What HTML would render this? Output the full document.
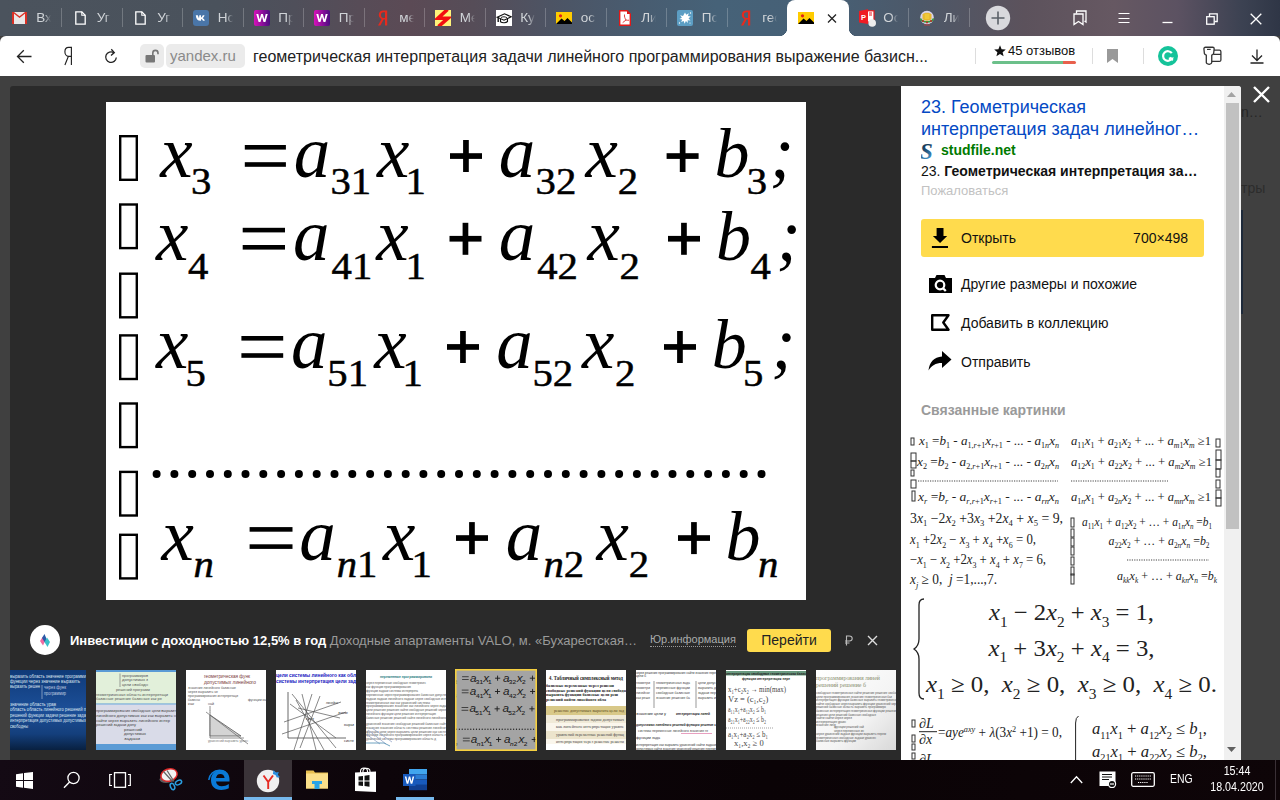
<!DOCTYPE html>
<html><head><meta charset="utf-8">
<style>
*{box-sizing:border-box;margin:0;padding:0}
html,body{width:1280px;height:800px;overflow:hidden;background:#404040;font-family:"Liberation Sans",sans-serif;position:relative}
.a{position:absolute}
#tabs{left:0;top:0;width:1280px;height:36px;background:linear-gradient(90deg,#4b535d 0%,#4a525c 17%,#4f4f5a 23%,#574c57 28%,#5b4a55 32%,#564d58 37%,#4d5464 43%,#485c70 50%,#466278 56%,#466076 64%,#4d5868 72%,#5c525c 80%,#665862 87%,#5c5262 92%,#3c4252 97%,#2f3646 100%)}
#addr{left:0;top:36px;width:1280px;height:40px;background:#fff;border-radius:6px 6px 0 0}
#content{left:0;top:76px;width:1280px;height:684px;background:#404040}
#inner{left:10px;top:86px;width:891px;height:674px;background:#2a2a2a;border-radius:3px 0 0 0}
#img{left:106px;top:102px;width:700px;height:498px;background:#fff;overflow:hidden}
#side{left:901px;top:86px;width:340px;height:674px;background:#fff;border-radius:0 3px 0 0;overflow:hidden}
#task{left:0;top:760px;width:1280px;height:40px;background:linear-gradient(100deg,#140a14 0%,#0d050a 30%,#0a0306 60%,#0e0508 100%)}
.tt{top:10px;height:16px;width:15px;font-size:13.5px;line-height:16px;color:#d0d4d8;white-space:nowrap;overflow:hidden;-webkit-mask-image:linear-gradient(90deg,#000 55%,transparent)}
.sep{top:8px;width:1px;height:19px;background:rgba(255,255,255,.22)}
</style></head><body>
<div id="tabs" class="a"></div>
<div class="a" style="left:12.0px;top:12.0px;width:15px;height:12px;line-height:0"><svg width="15" height="12" viewBox="0 0 15 12"><rect x="0" y="0" width="15" height="12" fill="#e8e8e8"/><path d="M0 0h2v12H0zM13 0h2v12h-2z" fill="#d93025"/><path d="M0 0l7.5 6L15 0h-2L7.5 4.2 2 0z" fill="#d93025"/></svg></div>
<div class="a tt" style="left:36.2px">Вх</div>
<div class="a" style="left:74.5px;top:11.0px;width:11px;height:14px;line-height:0"><svg width="11" height="14" viewBox="0 0 11 14"><path d="M0.8 0.8h6l3.4 3.4v9h-9.4z" fill="none" stroke="#fff" stroke-width="1.3"/><path d="M6.8 0.8v3.4h3.4" fill="none" stroke="#fff" stroke-width="1.1"/></svg></div>
<div class="a tt" style="left:96.7px">Уг</div>
<div class="a" style="left:135.0px;top:11.0px;width:11px;height:14px;line-height:0"><svg width="11" height="14" viewBox="0 0 11 14"><path d="M0.8 0.8h6l3.4 3.4v9h-9.4z" fill="none" stroke="#fff" stroke-width="1.3"/><path d="M6.8 0.8v3.4h3.4" fill="none" stroke="#fff" stroke-width="1.1"/></svg></div>
<div class="a tt" style="left:157.2px">Уг</div>
<div class="a" style="left:193.0px;top:10.0px;width:16px;height:16px;line-height:0"><svg width="16" height="16" viewBox="0 0 16 16"><rect width="16" height="16" rx="3" fill="#4a76a8"/><path d="M2.8 5.2h2l1.2 3.2.3-3.2h1.7v2.4c.6-.2 1.4-1.3 1.8-2.4h1.7c-.3 1.3-1.2 2.3-1.9 2.9.8.4 1.8 1.4 2.2 2.7h-1.9c-.4-.9-1.2-1.6-1.9-1.7v1.7h-.4c-3 0-4.5-2-4.8-5.6z" fill="#fff"/></svg></div>
<div class="a tt" style="left:217.7px">Нс</div>
<div class="a" style="left:253.5px;top:10.0px;width:16px;height:16px;line-height:0"><svg width="16" height="16" viewBox="0 0 16 16"><defs><linearGradient id="wg" x1="0" x2="1"><stop offset="0" stop-color="#d612b8"/><stop offset="1" stop-color="#4a0c80"/></linearGradient></defs><rect width="16" height="16" rx="2" fill="url(#wg)"/><path d="M2.3 4h2l1.3 5.4L7.1 4h1.8l1.5 5.4L11.7 4h2l-2.3 8h-1.9L8 6.8 6.5 12H4.6z" fill="#fff"/></svg></div>
<div class="a tt" style="left:278.2px">Пр</div>
<div class="a" style="left:314.0px;top:10.0px;width:16px;height:16px;line-height:0"><svg width="16" height="16" viewBox="0 0 16 16"><defs><linearGradient id="wg" x1="0" x2="1"><stop offset="0" stop-color="#d612b8"/><stop offset="1" stop-color="#4a0c80"/></linearGradient></defs><rect width="16" height="16" rx="2" fill="url(#wg)"/><path d="M2.3 4h2l1.3 5.4L7.1 4h1.8l1.5 5.4L11.7 4h2l-2.3 8h-1.9L8 6.8 6.5 12H4.6z" fill="#fff"/></svg></div>
<div class="a tt" style="left:338.7px">Пр</div>
<div class="a" style="left:377.5px;top:10.0px;width:10px;height:16px;line-height:0"><svg width="10" height="16" viewBox="0 0 10 16"><path d="M7 0.5h2.2v15H7V9.6H5.6L2.4 15.5H0L3.6 9C1.8 8.3 0.8 6.8 0.8 4.8 0.8 2 2.8 0.5 5.4 0.5zM7 2.3H5.5C3.9 2.3 3 3.3 3 5c0 1.9 1 2.9 2.6 2.9H7z" fill="#e62a1e"/></svg></div>
<div class="a tt" style="left:399.2px">ме</div>
<div class="a" style="left:435.0px;top:10.0px;width:16px;height:16px;line-height:0"><svg width="16" height="16" viewBox="0 0 16 16"><defs><clipPath id="bc"><rect width="16" height="16"/></clipPath></defs><rect width="16" height="16" fill="#fff47a"/><path d="M12.5 -0.5L3 8.2H13L3.5 16.5" fill="none" stroke="#f21010" stroke-width="3.6" stroke-linejoin="miter" clip-path="url(#bc)"/></svg></div>
<div class="a tt" style="left:459.7px">Ме</div>
<div class="a" style="left:495.5px;top:10.0px;width:16px;height:16px;line-height:0"><svg width="16" height="16" viewBox="0 0 16 16"><rect width="16" height="16" fill="#fff"/><path d="M1.2 7.2L8.5 3.8 15.2 6.8 8 10.2z" fill="none" stroke="#111" stroke-width="1.2"/><path d="M4.5 8.8v3c2 1.5 5.5 1.3 7-0.3V8.6" fill="none" stroke="#111" stroke-width="1.1"/><path d="M2.2 7.6v4.5" stroke="#111" stroke-width="1.4"/><path d="M5 7.5c2-1 4-1 6 .3" fill="none" stroke="#111" stroke-width=".9"/></svg></div>
<div class="a tt" style="left:520.2px">Ку</div>
<div class="a" style="left:556.0px;top:12.0px;width:16px;height:12px;line-height:0"><svg width="16" height="12" viewBox="0 0 16 12"><rect width="16" height="12" fill="#ffcc00"/><circle cx="4.5" cy="3.8" r="1.6" fill="#e0201a"/><path d="M0 12L5.5 6.5 8.5 9 11.5 6 16 10.5V12z" fill="#000"/></svg></div>
<div class="a tt" style="left:580.7px">ос</div>
<div class="a" style="left:618.5px;top:10.0px;width:12px;height:16px;line-height:0"><svg width="12" height="16" viewBox="0 0 12 16"><path d="M0.7 0.7h7.3l3.3 3.3v11.3H0.7z" fill="#fff" stroke="#e01818" stroke-width="1.4"/><path d="M8 0.7v3.3h3.3z" fill="#e01818"/><path d="M5.5 4.5c-.3 2 .5 4 1.5 5.5M7 10c1 .3 2 .4 3 .2M7 10c-1 .8-2.3 1.8-3.3 2.6" fill="none" stroke="#e04040" stroke-width="1"/></svg></div>
<div class="a tt" style="left:641.2px">Ли</div>
<div class="a" style="left:677.0px;top:10.0px;width:16px;height:16px;line-height:0"><svg width="16" height="16" viewBox="0 0 16 16"><rect width="16" height="16" rx="2" fill="#5c9ec4"/><path d="M8 2.5l1.2 2.3 2.6-1.5-.8 2.7 2.8.6-2.3 1.6 2 2.2-2.9-.2.3 2.8-2-1.9-1.3 2.6-.9-2.8-2.6 1.2 1.2-2.6L2.4 9l2.5-1.3-1.7-2.4 2.8.6z" fill="#fff"/><circle cx="13.5" cy="3" r=".7" fill="#fff"/><circle cx="2.5" cy="13" r=".7" fill="#fff"/><circle cx="13" cy="13" r=".6" fill="#fff"/></svg></div>
<div class="a tt" style="left:701.7px">Пс</div>
<div class="a" style="left:740.5px;top:10.0px;width:10px;height:16px;line-height:0"><svg width="10" height="16" viewBox="0 0 10 16"><path d="M7 0.5h2.2v15H7V9.6H5.6L2.4 15.5H0L3.6 9C1.8 8.3 0.8 6.8 0.8 4.8 0.8 2 2.8 0.5 5.4 0.5zM7 2.3H5.5C3.9 2.3 3 3.3 3 5c0 1.9 1 2.9 2.6 2.9H7z" fill="#e62a1e"/></svg></div>
<div class="a tt" style="left:762.2px">гео</div>
<div class="a" style="left:857.5px;top:9.0px;width:18px;height:18px;line-height:0"><svg width="18" height="18" viewBox="0 0 18 18"><rect x="9" y="1.8" width="7" height="11.3" fill="#fff" stroke="#e8151b" stroke-width="1.2"/><path d="M1 2L10 0.2V15L1 13.5z" fill="#ee1c23"/><text x="3" y="10.5" font-size="7.5" font-weight="bold" fill="#fff" font-family="Liberation Sans">P</text><path d="M11 4h3M11 6h3" stroke="#e8151b" stroke-width="1"/><circle cx="14.2" cy="14" r="3.8" fill="#ececec"/></svg></div>
<div class="a tt" style="left:883.2px">Ос</div>
<div class="a" style="left:919.0px;top:10.0px;width:16px;height:16px;line-height:0"><svg width="16" height="16" viewBox="0 0 16 16"><circle cx="8" cy="7.5" r="6.8" fill="#d8d4ec"/><path d="M3.5 4.5c1-2.5 8-2.5 9 0v4c-1 3-8 3-9 0z" fill="#e8b830"/><rect x="5.8" y="4" width="4.4" height="5" fill="#f0c838"/><path d="M1.5 8.5c1.5 4.5 11.5 4.5 13 0" stroke="#3a9a3a" stroke-width="1.6" fill="none"/><circle cx="4" cy="11" r=".9" fill="#d02020"/><circle cx="12" cy="11" r=".9" fill="#d02020"/><circle cx="8" cy="12.5" r=".9" fill="#d02020"/><path d="M5 15h6" stroke="#b04040" stroke-width="1"/></svg></div>
<div class="a tt" style="left:943.7px">Ли</div>
<div class="a sep" style="left:61.2px"></div>
<div class="a sep" style="left:121.7px"></div>
<div class="a sep" style="left:182.2px"></div>
<div class="a sep" style="left:242.7px"></div>
<div class="a sep" style="left:303.2px"></div>
<div class="a sep" style="left:363.7px"></div>
<div class="a sep" style="left:424.2px"></div>
<div class="a sep" style="left:484.7px"></div>
<div class="a sep" style="left:545.2px"></div>
<div class="a sep" style="left:605.7px"></div>
<div class="a sep" style="left:666.2px"></div>
<div class="a sep" style="left:726.7px"></div>
<div class="a sep" style="left:908.2px"></div>
<div class="a sep" style="left:968.7px"></div>
<div class="a" style="left:787px;top:0;width:62px;height:40px;background:#fff;border-radius:8px 8px 0 0"></div>
<div class="a" style="left:779px;top:28px;width:8px;height:8px;background:radial-gradient(circle at 0 0,transparent 8px,#fff 8.5px)"></div>
<div class="a" style="left:849px;top:28px;width:8px;height:8px;background:radial-gradient(circle at 100% 0,transparent 8px,#fff 8.5px)"></div>
<div class="a" style="left:798px;top:12px;width:16px;height:12px;line-height:0"><svg width="16" height="12" viewBox="0 0 16 12"><rect width="16" height="12" fill="#ffcc00"/><circle cx="4.5" cy="3.8" r="1.6" fill="#e0201a"/><path d="M0 12L5.5 6.5 8.5 9 11.5 6 16 10.5V12z" fill="#000"/></svg></div>
<svg class="a" style="left:827px;top:14px" width="10" height="9" viewBox="0 0 10 9"><path d="M1 0.5l8 8M9 0.5l-8 8" stroke="#222" stroke-width="1.3"/></svg>
<svg class="a" style="left:985px;top:5px" width="26" height="26" viewBox="0 0 26 26"><circle cx="13" cy="13" r="12.2" fill="#d9d9dd"/><path d="M6.5 13h13M13 6.5v13" stroke="#5a6068" stroke-width="1.6"/></svg>
<svg class="a" style="left:1073px;top:10px" width="14" height="16" viewBox="0 0 14 16"><path d="M3.5 3.5V1h9.5v11l-1.5-1" fill="none" stroke="#fff" stroke-width="1.3"/><path d="M1 4h9v10.5l-4.5-3-4.5 3z" fill="none" stroke="#fff" stroke-width="1.3"/></svg>
<svg class="a" style="left:1118px;top:12px" width="12" height="12" viewBox="0 0 12 12"><path d="M0.5 1.5h11M0.5 6.5h11M0.5 10.5h11" stroke="#fff" stroke-width="1"/></svg>
<svg class="a" style="left:1162px;top:21px" width="11" height="3" viewBox="0 0 11 3"><path d="M0.5 1.5h10" stroke="#fff" stroke-width="1.3"/></svg>
<svg class="a" style="left:1206px;top:13px" width="12" height="12" viewBox="0 0 12 12"><rect x="0.7" y="3.7" width="7.5" height="7.5" fill="none" stroke="#fff" stroke-width="1.3"/><path d="M3.5 3.5V0.8h7.7v7.7H8.5" fill="none" stroke="#fff" stroke-width="1.3"/></svg>
<svg class="a" style="left:1250px;top:13px" width="12" height="12" viewBox="0 0 12 12"><path d="M0.7 0.7l10.6 10.6M11.3 0.7L0.7 11.3" stroke="#fff" stroke-width="1.3"/></svg>

<div id="addr" class="a"></div>
<svg class="a" style="left:16px;top:49px" width="16" height="15" viewBox="0 0 16 15"><path d="M15.5 7.5H1.5M7.8 1.2L1.5 7.5l6.3 6.3" fill="none" stroke="#222" stroke-width="1.3"/></svg>
<svg class="a" style="left:63px;top:46px" width="11" height="20" viewBox="0 0 11 20"><path d="M8.4 19V1.3H5.6C3.4 1.3 1.9 3.2 1.9 5.7s1.5 4.6 3.7 4.6H8.4M5.4 10.3L1.9 19" fill="none" stroke="#222" stroke-width="1.15"/></svg>
<svg class="a" style="left:104px;top:48px" width="15" height="16" viewBox="0 0 15 16"><path d="M12.3 9.5A5.3 5.3 0 1 1 9.8 4.6" fill="none" stroke="#222" stroke-width="1.3"/><path d="M7.3 1.3l3 3.3-3.3 2.8" fill="none" stroke="#222" stroke-width="1.3"/></svg>
<div class="a" style="left:140px;top:44px;width:24px;height:24px;background:#ebebeb;border-radius:5px"></div>
<svg class="a" style="left:145px;top:49px" width="14" height="14" viewBox="0 0 14 14"><rect x="0.5" y="6" width="9.5" height="7.5" rx="1" fill="#777"/><path d="M7.8 6.5V4a2.6 2.6 0 0 1 5.2 0v1.2" fill="none" stroke="#777" stroke-width="1.6"/></svg>
<div class="a" style="left:166px;top:44px;width:79px;height:24px;background:#ebebeb;border-radius:5px"></div>
<div class="a" style="left:170px;top:44px;height:24px;line-height:24px;font-size:15px;color:#8a8a8a">yandex.ru</div>
<div class="a" id="url" style="left:253px;top:45px;height:24px;line-height:24px;font-size:16px;color:#222;white-space:nowrap">геометрическая интерпретация задачи линейного программирования выражение базисн...</div>
<div class="a" style="left:975px;top:48px;width:1px;height:16px;background:#ddd"></div>
<svg class="a" style="left:994px;top:45px" width="12" height="12" viewBox="0 0 12 12"><path d="M6 0.3l1.6 3.9 4.2.3-3.2 2.7 1 4.1L6 9.1 2.4 11.3l1-4.1L0.2 4.5l4.2-.3z" fill="#111"/></svg><div class="a" id="rev" style="left:1008px;top:43px;height:16px;line-height:16px;font-size:13px;color:#111;white-space:nowrap">45 отзывов</div>
<div class="a" style="left:992px;top:61px;width:84px;height:3px;border-radius:2px;background:linear-gradient(90deg,#6cc08a 0,#6cc08a 85%,#e8604c 85%)"></div>
<div class="a" style="left:1092px;top:48px;width:1px;height:16px;background:#ddd"></div>
<svg class="a" style="left:1107px;top:49px" width="11" height="14" viewBox="0 0 11 14"><path d="M0 0h11v14L5.5 10 0 14z" fill="#999"/></svg>
<div class="a" style="left:1143px;top:48px;width:1px;height:16px;background:#ddd"></div>
<svg class="a" style="left:1157px;top:45px" width="22" height="22" viewBox="0 0 22 22"><circle cx="11" cy="11" r="10" fill="#15c39a"/><path d="M14.8 8.2A4.8 4.8 0 1 0 15 13.5h-3.2" fill="none" stroke="#fff" stroke-width="2.2"/><path d="M13 12.5l2.8 2.8" stroke="#fff" stroke-width="1.8"/></svg>
<svg class="a" style="left:1201px;top:45px" width="22" height="22" viewBox="0 0 22 22"><path d="M4.5 2.25H11.7Q13.2 2.25 13.2 3.8L12.6 8.5Q12.2 9.8 10.75 10.2V17.5Q10.75 18.8 8.2 19.4Q5.3 18.8 5.3 17.5V10.2Q3.8 9.8 3.4 8.5L2.9 3.8Q2.9 2.25 4.5 2.25Z" fill="none" stroke="#333" stroke-width="1.3"/><path d="M6 4.4H9.7" stroke="#333" stroke-width="1.2"/><path d="M12.9 5.2H18.4Q19.9 5.2 19.9 6.7V14.9Q19.9 16.4 18.4 16.4H10.75M12.4 9.4H19.9" fill="none" stroke="#333" stroke-width="1.3"/></svg>
<svg class="a" style="left:1250px;top:49px" width="14" height="15" viewBox="0 0 14 15"><path d="M7 0.5v11M2 6.5l5 5 5-5M0.5 14h13" fill="none" stroke="#222" stroke-width="1.3"/></svg>

<div id="content" class="a"></div>
<div id="inner" class="a"></div>
<div class="a" style="left:1241px;top:104px;font-size:14px;line-height:16px;color:#262626;white-space:nowrap">n…</div>
<div class="a" style="left:1241px;top:180px;font-size:14px;line-height:16px;color:#2c2c2c;white-space:nowrap">тры</div>
<div class="a" style="left:1241px;top:210px;width:2px;height:104px;background:#1e2a3a"></div>

<div id="img" class="a"><svg width="700" height="498" font-family="Liberation Serif"><g id="mathg"><rect x="14.2" y="34.2" width="16.6" height="43.6" fill="none" stroke="#000" stroke-width="2.4"/><rect x="14.2" y="102.5" width="16.6" height="43.6" fill="none" stroke="#000" stroke-width="2.4"/><rect x="14.2" y="171.7" width="16.6" height="43.6" fill="none" stroke="#000" stroke-width="2.4"/><rect x="14.2" y="233.4" width="16.6" height="43.6" fill="none" stroke="#000" stroke-width="2.4"/><rect x="14.2" y="301.5" width="16.6" height="43.6" fill="none" stroke="#000" stroke-width="2.4"/><rect x="14.2" y="369.9" width="16.6" height="43.6" fill="none" stroke="#000" stroke-width="2.4"/><rect x="14.2" y="432.8" width="16.6" height="43.6" fill="none" stroke="#000" stroke-width="2.4"/><text x="54.2" y="75.4" font-size="73"><tspan font-style="italic">x</tspan></text><text transform="translate(85.1 91.8) scale(1.10 1)" font-size="37" stroke="#000" stroke-width="0.5"><tspan font-style="normal">3</tspan></text><rect x="138.8" y="43.0" width="41.1" height="4.6"/><rect x="138.8" y="60.2" width="41.1" height="4.6"/><text x="187.8" y="75.4" font-size="73"><tspan font-style="italic">a</tspan></text><text transform="translate(224.5 91.8) scale(1.10 1)" font-size="37" stroke="#000" stroke-width="0.5"><tspan font-style="normal">3</tspan><tspan font-style="normal">1</tspan></text><text x="270.9" y="75.4" font-size="73"><tspan font-style="italic">x</tspan></text><text transform="translate(299.4 91.8) scale(1.10 1)" font-size="37" stroke="#000" stroke-width="0.5"><tspan font-style="normal">1</tspan></text><rect x="344.0" y="51.2" width="32" height="5.7"/><rect x="357.1" y="38.0" width="5.7" height="32"/><text x="392.8" y="75.4" font-size="73"><tspan font-style="italic">a</tspan></text><text transform="translate(429.6 91.8) scale(1.10 1)" font-size="37" stroke="#000" stroke-width="0.5"><tspan font-style="normal">3</tspan><tspan font-style="normal">2</tspan></text><text x="479.4" y="75.4" font-size="73"><tspan font-style="italic">x</tspan></text><text transform="translate(511.7 91.8) scale(1.10 1)" font-size="37" stroke="#000" stroke-width="0.5"><tspan font-style="normal">2</tspan></text><rect x="560.6" y="51.2" width="32" height="5.7"/><rect x="573.8" y="38.0" width="5.7" height="32"/><text x="608.4" y="75.4" font-size="70"><tspan font-style="italic">b</tspan></text><text transform="translate(640.7 91.8) scale(1.10 1)" font-size="37" stroke="#000" stroke-width="0.5"><tspan font-style="normal">3</tspan></text><text x="663.8" y="75.4" font-size="73"><tspan font-style="italic">;</tspan></text><text x="50.1" y="158.2" font-size="73"><tspan font-style="italic">x</tspan></text><text transform="translate(82.1 176.8) scale(1.10 1)" font-size="37" stroke="#000" stroke-width="0.5"><tspan font-style="normal">4</tspan></text><rect x="136.7" y="125.8" width="42.3" height="4.6"/><rect x="136.7" y="143.0" width="42.3" height="4.6"/><text x="187.0" y="158.2" font-size="73"><tspan font-style="italic">a</tspan></text><text transform="translate(225.6 176.8) scale(1.10 1)" font-size="37" stroke="#000" stroke-width="0.5"><tspan font-style="normal">4</tspan><tspan font-style="normal">1</tspan></text><text x="270.2" y="158.2" font-size="73"><tspan font-style="italic">x</tspan></text><text transform="translate(299.4 176.8) scale(1.10 1)" font-size="37" stroke="#000" stroke-width="0.5"><tspan font-style="normal">1</tspan></text><rect x="343.5" y="133.9" width="32" height="5.7"/><rect x="356.6" y="120.8" width="5.7" height="32"/><text x="392.8" y="158.2" font-size="73"><tspan font-style="italic">a</tspan></text><text transform="translate(431.2 176.8) scale(1.10 1)" font-size="37" stroke="#000" stroke-width="0.5"><tspan font-style="normal">4</tspan><tspan font-style="normal">2</tspan></text><text x="481.6" y="158.2" font-size="73"><tspan font-style="italic">x</tspan></text><text transform="translate(513.6 176.8) scale(1.10 1)" font-size="37" stroke="#000" stroke-width="0.5"><tspan font-style="normal">2</tspan></text><rect x="562.0" y="133.9" width="32" height="5.7"/><rect x="575.1" y="120.8" width="5.7" height="32"/><text x="609.9" y="158.2" font-size="70"><tspan font-style="italic">b</tspan></text><text transform="translate(644.5 176.8) scale(1.10 1)" font-size="37" stroke="#000" stroke-width="0.5"><tspan font-style="normal">4</tspan></text><text x="670.6" y="158.2" font-size="73"><tspan font-style="italic">;</tspan></text><text x="50.1" y="266.4" font-size="73"><tspan font-style="italic">x</tspan></text><text transform="translate(79.6 284.0) scale(1.10 1)" font-size="37" stroke="#000" stroke-width="0.5"><tspan font-style="normal">5</tspan></text><rect x="135.4" y="234.0" width="41.8" height="4.6"/><rect x="135.4" y="251.2" width="41.8" height="4.6"/><text x="185.1" y="266.4" font-size="73"><tspan font-style="italic">a</tspan></text><text transform="translate(221.3 284.0) scale(1.10 1)" font-size="37" stroke="#000" stroke-width="0.5"><tspan font-style="normal">5</tspan><tspan font-style="normal">1</tspan></text><text x="268.3" y="266.4" font-size="73"><tspan font-style="italic">x</tspan></text><text transform="translate(296.4 284.0) scale(1.10 1)" font-size="37" stroke="#000" stroke-width="0.5"><tspan font-style="normal">1</tspan></text><rect x="341.0" y="242.1" width="32" height="5.7"/><rect x="354.1" y="229.0" width="5.7" height="32"/><text x="390.2" y="266.4" font-size="73"><tspan font-style="italic">a</tspan></text><text transform="translate(426.4 284.0) scale(1.10 1)" font-size="37" stroke="#000" stroke-width="0.5"><tspan font-style="normal">5</tspan><tspan font-style="normal">2</tspan></text><text x="476.1" y="266.4" font-size="73"><tspan font-style="italic">x</tspan></text><text transform="translate(509.0 284.0) scale(1.10 1)" font-size="37" stroke="#000" stroke-width="0.5"><tspan font-style="normal">2</tspan></text><rect x="558.0" y="242.1" width="32" height="5.7"/><rect x="571.1" y="229.0" width="5.7" height="32"/><text x="605.8" y="266.4" font-size="70"><tspan font-style="italic">b</tspan></text><text transform="translate(636.9 284.0) scale(1.10 1)" font-size="37" stroke="#000" stroke-width="0.5"><tspan font-style="normal">5</tspan></text><text x="665.2" y="266.4" font-size="73"><tspan font-style="italic">;</tspan></text><text x="55.6" y="457.5" font-size="73"><tspan font-style="italic">x</tspan></text><text transform="translate(87.4 475.3) scale(1.10 1)" font-size="37" stroke="#000" stroke-width="0.5"><tspan font-style="italic">n</tspan></text><rect x="143.6" y="425.1" width="42.9" height="4.6"/><rect x="143.6" y="442.3" width="42.9" height="4.6"/><text x="193.3" y="457.5" font-size="73"><tspan font-style="italic">a</tspan></text><text transform="translate(230.7 475.3) scale(1.10 1)" font-size="37" stroke="#000" stroke-width="0.5"><tspan font-style="italic">n</tspan><tspan font-style="normal">1</tspan></text><text x="277.1" y="457.5" font-size="73"><tspan font-style="italic">x</tspan></text><text transform="translate(305.4 475.3) scale(1.10 1)" font-size="37" stroke="#000" stroke-width="0.5"><tspan font-style="normal">1</tspan></text><rect x="350.0" y="433.2" width="32" height="5.7"/><rect x="363.1" y="420.1" width="5.7" height="32"/><text x="399.8" y="457.5" font-size="73"><tspan font-style="italic">a</tspan></text><text transform="translate(437.4 475.3) scale(1.10 1)" font-size="37" stroke="#000" stroke-width="0.5"><tspan font-style="italic">n</tspan><tspan font-style="normal">2</tspan></text><text x="490.4" y="457.5" font-size="73"><tspan font-style="italic">x</tspan></text><text transform="translate(522.7 475.3) scale(1.10 1)" font-size="37" stroke="#000" stroke-width="0.5"><tspan font-style="normal">2</tspan></text><rect x="572.0" y="433.2" width="32" height="5.7"/><rect x="585.1" y="420.1" width="5.7" height="32"/><text x="619.4" y="457.5" font-size="70"><tspan font-style="italic">b</tspan></text><text transform="translate(652.0 475.3) scale(1.10 1)" font-size="37" stroke="#000" stroke-width="0.5"><tspan font-style="italic">n</tspan></text><circle cx="50.6" cy="372" r="4"/><circle cx="68.4" cy="372" r="4"/><circle cx="86.2" cy="372" r="4"/><circle cx="104.0" cy="372" r="4"/><circle cx="121.8" cy="372" r="4"/><circle cx="139.5" cy="372" r="4"/><circle cx="157.3" cy="372" r="4"/><circle cx="175.1" cy="372" r="4"/><circle cx="192.9" cy="372" r="4"/><circle cx="210.7" cy="372" r="4"/><circle cx="228.5" cy="372" r="4"/><circle cx="246.3" cy="372" r="4"/><circle cx="264.1" cy="372" r="4"/><circle cx="281.9" cy="372" r="4"/><circle cx="299.7" cy="372" r="4"/><circle cx="317.4" cy="372" r="4"/><circle cx="335.2" cy="372" r="4"/><circle cx="353.0" cy="372" r="4"/><circle cx="370.8" cy="372" r="4"/><circle cx="388.6" cy="372" r="4"/><circle cx="406.4" cy="372" r="4"/><circle cx="424.2" cy="372" r="4"/><circle cx="442.0" cy="372" r="4"/><circle cx="459.8" cy="372" r="4"/><circle cx="477.6" cy="372" r="4"/><circle cx="495.4" cy="372" r="4"/><circle cx="513.1" cy="372" r="4"/><circle cx="530.9" cy="372" r="4"/><circle cx="548.7" cy="372" r="4"/><circle cx="566.5" cy="372" r="4"/><circle cx="584.3" cy="372" r="4"/><circle cx="602.1" cy="372" r="4"/><circle cx="619.9" cy="372" r="4"/><circle cx="637.7" cy="372" r="4"/><circle cx="655.5" cy="372" r="4"/></g></svg></div>
<div id="side" class="a">
<div class="a" style="left:20px;top:9.5px;width:300px;font-size:18px;line-height:22px;color:#0449c4">23. Геометрическая<br>интерпретация задач линейног…</div>
<svg class="a" style="left:20px;top:55px" width="16" height="20" viewBox="0 0 16 20"><defs><linearGradient id="sg" x1="0" y1="0" x2="0.3" y2="1"><stop offset="0" stop-color="#0c1c30"/><stop offset=".5" stop-color="#1d4a70"/><stop offset="1" stop-color="#4aa0d8"/></linearGradient></defs><text x="-1" y="18" font-family="Liberation Serif" font-weight="bold" font-style="italic" font-size="23" fill="url(#sg)">S</text></svg>
<div class="a" style="left:40px;top:55px;font-size:14px;line-height:18px;font-weight:bold;color:#007a00">studfile.net</div>
<div class="a" style="left:20px;top:76px;width:276px;font-size:14px;line-height:18px;color:#111;white-space:nowrap;overflow:hidden">23. <b>Геометрическая интерпретация за…</b></div>
<div class="a" style="left:20px;top:96px;font-size:13px;line-height:18px;color:#c2c2c2">Пожаловаться</div>
<div class="a" style="left:20px;top:133px;width:283px;height:38px;background:#ffdb4d;border-radius:3px"></div>
<svg class="a" style="left:30px;top:141px" width="18" height="22" viewBox="0 0 18 22"><path d="M5.6 1h6.9v7.9h3.7L9.05 15.9 1.9 8.9h3.7z" fill="#000"/><rect x="0.9" y="19" width="16.1" height="2" fill="#000"/></svg>
<div class="a" style="left:60px;top:143px;font-size:14px;line-height:18px;color:#111">Открыть</div>
<div class="a" style="left:183px;top:143px;width:104px;text-align:right;font-size:14px;line-height:18px;color:#111">700×498</div>
<svg class="a" style="left:28px;top:189px" width="23" height="18" viewBox="0 0 23 18"><path d="M0 3h6l1.5-3h8L17 3h6v15H0z" fill="#000"/><circle cx="11" cy="10" r="4.3" fill="none" stroke="#fff" stroke-width="2.2"/><path d="M13.8 13l3 3" stroke="#fff" stroke-width="2.4"/></svg>
<div class="a" style="left:60px;top:189px;font-size:14px;line-height:18px;color:#111">Другие размеры и похожие</div>
<svg class="a" style="left:30px;top:228px" width="19" height="17" viewBox="0 0 19 17"><path d="M1.2 1.2h16.3L12.3 8.5l5.2 7.3H1.2z" fill="none" stroke="#000" stroke-width="2.4" stroke-linejoin="round"/></svg>
<div class="a" style="left:60px;top:228px;font-size:14px;line-height:18px;color:#111">Добавить в коллекцию</div>
<svg class="a" style="left:27px;top:265px" width="24" height="20" viewBox="0 0 24 20"><path d="M14 0l9.5 8.5L14 17v-5C7.5 12 3.5 14.5 0.5 19.5 1.5 11 6 6 14 5.5z" fill="#000"/></svg>
<div class="a" style="left:60px;top:267px;font-size:14px;line-height:18px;color:#111">Отправить</div>
<div class="a" style="left:20px;top:315px;font-size:14px;line-height:18px;font-weight:bold;color:#9a9a9a">Связанные картинки</div>
<svg class="a" style="left:0;top:0" width="340" height="674" font-family="Liberation Serif"><text x="18.0" y="359.0" font-size="12.0" text-anchor="start" fill="#222" textLength="140.0" lengthAdjust="spacingAndGlyphs"><tspan font-style="italic" font-size="12.0">x</tspan><tspan dy="3.4" font-size="7.4">1</tspan><tspan dy="-3.4" font-size="12.0">&#160;=</tspan><tspan font-style="italic" font-size="12.0">b</tspan><tspan dy="3.4" font-size="7.4">1</tspan><tspan dy="-3.4" font-size="12.0">&#160;-&#160;</tspan><tspan font-style="italic" font-size="12.0">a</tspan><tspan dy="3.4" font-size="7.4">1,</tspan><tspan font-style="italic" font-size="7.4">r</tspan><tspan font-size="7.4">+1</tspan><tspan font-style="italic" dy="-3.4" font-size="12.0">x</tspan><tspan font-style="italic" dy="3.4" font-size="7.4">r</tspan><tspan font-size="7.4">+1</tspan><tspan dy="-3.4" font-size="12.0">&#160;-&#160;...&#160;-&#160;</tspan><tspan font-style="italic" font-size="12.0">a</tspan><tspan dy="3.4" font-size="7.4">1</tspan><tspan font-style="italic" font-size="7.4">n</tspan><tspan font-style="italic" dy="-3.4" font-size="12.0">x</tspan><tspan font-style="italic" dy="3.4" font-size="7.4">n</tspan></text><text x="16.0" y="380.0" font-size="12.0" text-anchor="start" fill="#222" textLength="142.0" lengthAdjust="spacingAndGlyphs"><tspan font-style="italic" font-size="12.0">x</tspan><tspan dy="3.4" font-size="7.4">2</tspan><tspan dy="-3.4" font-size="12.0">&#160;=</tspan><tspan font-style="italic" font-size="12.0">b</tspan><tspan dy="3.4" font-size="7.4">2</tspan><tspan dy="-3.4" font-size="12.0">&#160;-&#160;</tspan><tspan font-style="italic" font-size="12.0">a</tspan><tspan dy="3.4" font-size="7.4">2,</tspan><tspan font-style="italic" font-size="7.4">r</tspan><tspan font-size="7.4">+1</tspan><tspan font-style="italic" dy="-3.4" font-size="12.0">x</tspan><tspan font-style="italic" dy="3.4" font-size="7.4">r</tspan><tspan font-size="7.4">+1</tspan><tspan dy="-3.4" font-size="12.0">&#160;-&#160;...&#160;-&#160;</tspan><tspan font-style="italic" font-size="12.0">a</tspan><tspan dy="3.4" font-size="7.4">2</tspan><tspan font-style="italic" font-size="7.4">n</tspan><tspan font-style="italic" dy="-3.4" font-size="12.0">x</tspan><tspan font-style="italic" dy="3.4" font-size="7.4">n</tspan></text><path d="M17.0 395.0H157.0" stroke="#444" stroke-width="1.2" stroke-dasharray="1.2 1.2"/><text x="17.0" y="415.0" font-size="12.0" text-anchor="start" fill="#222" textLength="141.0" lengthAdjust="spacingAndGlyphs"><tspan font-style="italic" font-size="12.0">x</tspan><tspan font-style="italic" dy="3.4" font-size="7.4">r</tspan><tspan dy="-3.4" font-size="12.0">&#160;=</tspan><tspan font-style="italic" font-size="12.0">b</tspan><tspan font-style="italic" dy="3.4" font-size="7.4">r</tspan><tspan dy="-3.4" font-size="12.0">&#160;-&#160;</tspan><tspan font-style="italic" font-size="12.0">a</tspan><tspan font-style="italic" dy="3.4" font-size="7.4">r</tspan><tspan font-size="7.4">,</tspan><tspan font-style="italic" font-size="7.4">r</tspan><tspan font-size="7.4">+1</tspan><tspan font-style="italic" dy="-3.4" font-size="12.0">x</tspan><tspan font-style="italic" dy="3.4" font-size="7.4">r</tspan><tspan font-size="7.4">+1</tspan><tspan dy="-3.4" font-size="12.0">&#160;-&#160;...&#160;-&#160;</tspan><tspan font-style="italic" font-size="12.0">a</tspan><tspan font-style="italic" dy="3.4" font-size="7.4">rn</tspan><tspan font-style="italic" dy="-3.4" font-size="12.0">x</tspan><tspan font-style="italic" dy="3.4" font-size="7.4">n</tspan></text><rect x="10.0" y="352.0" width="3.0" height="7.0" fill="none" stroke="#333" stroke-width="1.0"/><rect x="10.0" y="367.0" width="5.0" height="8.0" fill="none" stroke="#333" stroke-width="1.0"/><rect x="10.0" y="375.0" width="5.0" height="7.0" fill="none" stroke="#333" stroke-width="1.0"/><rect x="10.0" y="384.0" width="3.0" height="6.0" fill="none" stroke="#333" stroke-width="1.0"/><rect x="10.0" y="394.0" width="5.0" height="8.0" fill="none" stroke="#333" stroke-width="1.0"/><rect x="11.0" y="405.0" width="3.0" height="10.0" fill="none" stroke="#333" stroke-width="1.0"/><text x="170.0" y="359.0" font-size="12.0" text-anchor="start" fill="#222" textLength="140.0" lengthAdjust="spacingAndGlyphs"><tspan font-style="italic" font-size="12.0">a</tspan><tspan dy="3.4" font-size="7.4">11</tspan><tspan font-style="italic" dy="-3.4" font-size="12.0">x</tspan><tspan dy="3.4" font-size="7.4">1</tspan><tspan dy="-3.4" font-size="12.0">&#160;+&#160;</tspan><tspan font-style="italic" font-size="12.0">a</tspan><tspan dy="3.4" font-size="7.4">21</tspan><tspan font-style="italic" dy="-3.4" font-size="12.0">x</tspan><tspan dy="3.4" font-size="7.4">2</tspan><tspan dy="-3.4" font-size="12.0">&#160;+&#160;...&#160;+&#160;</tspan><tspan font-style="italic" font-size="12.0">a</tspan><tspan font-style="italic" dy="3.4" font-size="7.4">m</tspan><tspan font-size="7.4">1</tspan><tspan font-style="italic" dy="-3.4" font-size="12.0">x</tspan><tspan font-style="italic" dy="3.4" font-size="7.4">m</tspan><tspan dy="-3.4" font-size="12.0">&#160;≥1</tspan></text><text x="170.0" y="380.0" font-size="12.0" text-anchor="start" fill="#222" textLength="141.0" lengthAdjust="spacingAndGlyphs"><tspan font-style="italic" font-size="12.0">a</tspan><tspan dy="3.4" font-size="7.4">12</tspan><tspan font-style="italic" dy="-3.4" font-size="12.0">x</tspan><tspan dy="3.4" font-size="7.4">1</tspan><tspan dy="-3.4" font-size="12.0">&#160;+&#160;</tspan><tspan font-style="italic" font-size="12.0">a</tspan><tspan dy="3.4" font-size="7.4">22</tspan><tspan font-style="italic" dy="-3.4" font-size="12.0">x</tspan><tspan dy="3.4" font-size="7.4">2</tspan><tspan dy="-3.4" font-size="12.0">&#160;+&#160;...&#160;+&#160;</tspan><tspan font-style="italic" font-size="12.0">a</tspan><tspan font-style="italic" dy="3.4" font-size="7.4">m</tspan><tspan font-size="7.4">2</tspan><tspan font-style="italic" dy="-3.4" font-size="12.0">x</tspan><tspan font-style="italic" dy="3.4" font-size="7.4">m</tspan><tspan dy="-3.4" font-size="12.0">&#160;≥1</tspan></text><path d="M170.0 395.0H267.0" stroke="#444" stroke-width="1.2" stroke-dasharray="1.2 1.2"/><text x="170.0" y="415.0" font-size="12.0" text-anchor="start" fill="#222" textLength="140.0" lengthAdjust="spacingAndGlyphs"><tspan font-style="italic" font-size="12.0">a</tspan><tspan dy="3.4" font-size="7.4">1</tspan><tspan font-style="italic" font-size="7.4">n</tspan><tspan font-style="italic" dy="-3.4" font-size="12.0">x</tspan><tspan dy="3.4" font-size="7.4">1</tspan><tspan dy="-3.4" font-size="12.0">&#160;+&#160;</tspan><tspan font-style="italic" font-size="12.0">a</tspan><tspan dy="3.4" font-size="7.4">2</tspan><tspan font-style="italic" font-size="7.4">n</tspan><tspan font-style="italic" dy="-3.4" font-size="12.0">x</tspan><tspan dy="3.4" font-size="7.4">2</tspan><tspan dy="-3.4" font-size="12.0">&#160;+&#160;...&#160;+&#160;</tspan><tspan font-style="italic" font-size="12.0">a</tspan><tspan font-style="italic" dy="3.4" font-size="7.4">mn</tspan><tspan font-style="italic" dy="-3.4" font-size="12.0">x</tspan><tspan font-style="italic" dy="3.4" font-size="7.4">m</tspan><tspan dy="-3.4" font-size="12.0">&#160;≥1</tspan></text><rect x="315.0" y="353.0" width="4.0" height="8.0" fill="none" stroke="#333" stroke-width="1.0"/><rect x="315.0" y="364.0" width="5.0" height="10.0" fill="none" stroke="#333" stroke-width="1.0"/><rect x="315.0" y="374.0" width="5.0" height="9.0" fill="none" stroke="#333" stroke-width="1.0"/><rect x="315.0" y="383.0" width="4.0" height="8.0" fill="none" stroke="#333" stroke-width="1.0"/><rect x="315.0" y="394.0" width="4.0" height="8.0" fill="none" stroke="#333" stroke-width="1.0"/><rect x="315.0" y="404.0" width="5.0" height="8.0" fill="none" stroke="#333" stroke-width="1.0"/><rect x="315.0" y="412.0" width="5.0" height="8.0" fill="none" stroke="#333" stroke-width="1.0"/><text x="9.0" y="436.5" font-size="14.0" text-anchor="start" fill="#222" textLength="153.0" lengthAdjust="spacingAndGlyphs"><tspan font-size="14.0">3</tspan><tspan font-style="italic" font-size="14.0">x</tspan><tspan dy="3.9" font-size="8.7">1</tspan><tspan dy="-3.9" font-size="14.0">&#160;−2</tspan><tspan font-style="italic" font-size="14.0">x</tspan><tspan dy="3.9" font-size="8.7">2</tspan><tspan dy="-3.9" font-size="14.0">&#160;+3</tspan><tspan font-style="italic" font-size="14.0">x</tspan><tspan dy="3.9" font-size="8.7">3</tspan><tspan dy="-3.9" font-size="14.0">&#160;+2</tspan><tspan font-style="italic" font-size="14.0">x</tspan><tspan dy="3.9" font-size="8.7">4</tspan><tspan dy="-3.9" font-size="14.0">&#160;+&#160;</tspan><tspan font-style="italic" font-size="14.0">x</tspan><tspan dy="3.9" font-size="8.7">5</tspan><tspan dy="-3.9" font-size="14.0">&#160;=&#160;9,</tspan></text><text x="9.0" y="457.7" font-size="14.0" text-anchor="start" fill="#222" textLength="126.0" lengthAdjust="spacingAndGlyphs"><tspan font-style="italic" font-size="14.0">x</tspan><tspan dy="3.9" font-size="8.7">1</tspan><tspan dy="-3.9" font-size="14.0">&#160;+2</tspan><tspan font-style="italic" font-size="14.0">x</tspan><tspan dy="3.9" font-size="8.7">2</tspan><tspan dy="-3.9" font-size="14.0">&#160;−&#160;</tspan><tspan font-style="italic" font-size="14.0">x</tspan><tspan dy="3.9" font-size="8.7">3</tspan><tspan dy="-3.9" font-size="14.0">&#160;+&#160;</tspan><tspan font-style="italic" font-size="14.0">x</tspan><tspan dy="3.9" font-size="8.7">4</tspan><tspan dy="-3.9" font-size="14.0">&#160;+</tspan><tspan font-style="italic" font-size="14.0">x</tspan><tspan dy="3.9" font-size="8.7">6</tspan><tspan dy="-3.9" font-size="14.0">&#160;=&#160;0,</tspan></text><text x="9.0" y="477.7" font-size="14.0" text-anchor="start" fill="#222" textLength="136.0" lengthAdjust="spacingAndGlyphs"><tspan font-size="14.0">−</tspan><tspan font-style="italic" font-size="14.0">x</tspan><tspan dy="3.9" font-size="8.7">1</tspan><tspan dy="-3.9" font-size="14.0">&#160;−&#160;</tspan><tspan font-style="italic" font-size="14.0">x</tspan><tspan dy="3.9" font-size="8.7">2</tspan><tspan dy="-3.9" font-size="14.0">&#160;+2</tspan><tspan font-style="italic" font-size="14.0">x</tspan><tspan dy="3.9" font-size="8.7">3</tspan><tspan dy="-3.9" font-size="14.0">&#160;+&#160;</tspan><tspan font-style="italic" font-size="14.0">x</tspan><tspan dy="3.9" font-size="8.7">4</tspan><tspan dy="-3.9" font-size="14.0">&#160;+&#160;</tspan><tspan font-style="italic" font-size="14.0">x</tspan><tspan dy="3.9" font-size="8.7">7</tspan><tspan dy="-3.9" font-size="14.0">&#160;=&#160;6,</tspan></text><text x="9.0" y="497.7" font-size="14.0" text-anchor="start" fill="#222" textLength="87.0" lengthAdjust="spacingAndGlyphs"><tspan font-style="italic" font-size="14.0">x</tspan><tspan font-style="italic" dy="3.9" font-size="8.7">j</tspan><tspan dy="-3.9" font-size="14.0">&#160;≥&#160;0,&#160;&#160;</tspan><tspan font-style="italic" font-size="14.0">j</tspan><tspan font-size="14.0">&#160;=1,...,7.</tspan></text><text x="181.0" y="440.0" font-size="12.0" text-anchor="start" fill="#222" textLength="130.0" lengthAdjust="spacingAndGlyphs"><tspan font-style="italic" font-size="12.0">a</tspan><tspan dy="3.4" font-size="7.4">11</tspan><tspan font-style="italic" dy="-3.4" font-size="12.0">x</tspan><tspan dy="3.4" font-size="7.4">1</tspan><tspan dy="-3.4" font-size="12.0">&#160;+&#160;</tspan><tspan font-style="italic" font-size="12.0">a</tspan><tspan dy="3.4" font-size="7.4">12</tspan><tspan font-style="italic" dy="-3.4" font-size="12.0">x</tspan><tspan dy="3.4" font-size="7.4">2</tspan><tspan dy="-3.4" font-size="12.0">&#160;+&#160;…&#160;+&#160;</tspan><tspan font-style="italic" font-size="12.0">a</tspan><tspan dy="3.4" font-size="7.4">1</tspan><tspan font-style="italic" font-size="7.4">n</tspan><tspan font-style="italic" dy="-3.4" font-size="12.0">x</tspan><tspan font-style="italic" dy="3.4" font-size="7.4">n</tspan><tspan dy="-3.4" font-size="12.0">&#160;=</tspan><tspan font-style="italic" font-size="12.0">b</tspan><tspan dy="3.4" font-size="7.4">1</tspan></text><text x="207.5" y="458.5" font-size="12.0" text-anchor="start" fill="#222" textLength="101.0" lengthAdjust="spacingAndGlyphs"><tspan font-style="italic" font-size="12.0">a</tspan><tspan dy="3.4" font-size="7.4">22</tspan><tspan font-style="italic" dy="-3.4" font-size="12.0">x</tspan><tspan dy="3.4" font-size="7.4">2</tspan><tspan dy="-3.4" font-size="12.0">&#160;+&#160;…&#160;+&#160;</tspan><tspan font-style="italic" font-size="12.0">a</tspan><tspan dy="3.4" font-size="7.4">2</tspan><tspan font-style="italic" font-size="7.4">n</tspan><tspan font-style="italic" dy="-3.4" font-size="12.0">x</tspan><tspan font-style="italic" dy="3.4" font-size="7.4">n</tspan><tspan dy="-3.4" font-size="12.0">&#160;=</tspan><tspan font-style="italic" font-size="12.0">b</tspan><tspan dy="3.4" font-size="7.4">2</tspan></text><path d="M226.0 474.0H308.0" stroke="#444" stroke-width="1.2" stroke-dasharray="1.2 1.2"/><text x="216.0" y="493.5" font-size="12.0" text-anchor="start" fill="#222" textLength="100.0" lengthAdjust="spacingAndGlyphs"><tspan font-style="italic" font-size="12.0">a</tspan><tspan font-style="italic" dy="3.4" font-size="7.4">kk</tspan><tspan font-style="italic" dy="-3.4" font-size="12.0">x</tspan><tspan font-style="italic" dy="3.4" font-size="7.4">k</tspan><tspan dy="-3.4" font-size="12.0">&#160;+&#160;…&#160;+&#160;</tspan><tspan font-style="italic" font-size="12.0">a</tspan><tspan font-style="italic" dy="3.4" font-size="7.4">kn</tspan><tspan font-style="italic" dy="-3.4" font-size="12.0">x</tspan><tspan font-style="italic" dy="3.4" font-size="7.4">n</tspan><tspan dy="-3.4" font-size="12.0">&#160;=</tspan><tspan font-style="italic" font-size="12.0">b</tspan><tspan font-style="italic" dy="3.4" font-size="7.4">k</tspan></text><rect x="170.0" y="432.0" width="3.0" height="9.0" fill="none" stroke="#333" stroke-width="1.0"/><rect x="170.0" y="443.0" width="3.0" height="8.0" fill="none" stroke="#333" stroke-width="1.0"/><rect x="170.0" y="452.0" width="3.0" height="8.0" fill="none" stroke="#333" stroke-width="1.0"/><rect x="170.0" y="461.0" width="3.0" height="8.0" fill="none" stroke="#333" stroke-width="1.0"/><rect x="170.0" y="471.0" width="3.0" height="8.0" fill="none" stroke="#333" stroke-width="1.0"/><rect x="170.0" y="481.0" width="3.0" height="8.0" fill="none" stroke="#333" stroke-width="1.0"/><rect x="170.0" y="488.0" width="3.0" height="10.0" fill="none" stroke="#333" stroke-width="1.0"/><path d="M23.0 513.0c-4 0-5 2-5 6v34c0 5-2 8-5 10 3 2 5 5 5 10v34c0 4 1 6 5 6" fill="none" stroke="#222" stroke-width="1.3"/><text x="88.0" y="534.2" font-size="23.0" text-anchor="start" fill="#222" textLength="165.0" lengthAdjust="spacingAndGlyphs"><tspan font-style="italic" font-size="23.0">x</tspan><tspan dy="6.4" font-size="14.3">1</tspan><tspan dy="-6.4" font-size="23.0">&#160;−&#160;2</tspan><tspan font-style="italic" font-size="23.0">x</tspan><tspan dy="6.4" font-size="14.3">2</tspan><tspan dy="-6.4" font-size="23.0">&#160;+&#160;</tspan><tspan font-style="italic" font-size="23.0">x</tspan><tspan dy="6.4" font-size="14.3">3</tspan><tspan dy="-6.4" font-size="23.0">&#160;=&#160;1,</tspan></text><text x="87.5" y="569.6" font-size="23.0" text-anchor="start" fill="#222" textLength="166.0" lengthAdjust="spacingAndGlyphs"><tspan font-style="italic" font-size="23.0">x</tspan><tspan dy="6.4" font-size="14.3">1</tspan><tspan dy="-6.4" font-size="23.0">&#160;+&#160;3</tspan><tspan font-style="italic" font-size="23.0">x</tspan><tspan dy="6.4" font-size="14.3">2</tspan><tspan dy="-6.4" font-size="23.0">&#160;+&#160;</tspan><tspan font-style="italic" font-size="23.0">x</tspan><tspan dy="6.4" font-size="14.3">4</tspan><tspan dy="-6.4" font-size="23.0">&#160;=&#160;3,</tspan></text><text x="25.0" y="606.4" font-size="23.0" text-anchor="start" fill="#222" textLength="291.0" lengthAdjust="spacingAndGlyphs"><tspan font-style="italic" font-size="23.0">x</tspan><tspan dy="6.4" font-size="14.3">1</tspan><tspan dy="-6.4" font-size="23.0">&#160;≥&#160;0,&#160;&#160;</tspan><tspan font-style="italic" font-size="23.0">x</tspan><tspan dy="6.4" font-size="14.3">2</tspan><tspan dy="-6.4" font-size="23.0">&#160;≥&#160;0,&#160;&#160;</tspan><tspan font-style="italic" font-size="23.0">x</tspan><tspan dy="6.4" font-size="14.3">3</tspan><tspan dy="-6.4" font-size="23.0">&#160;≥&#160;0,&#160;&#160;</tspan><tspan font-style="italic" font-size="23.0">x</tspan><tspan dy="6.4" font-size="14.3">4</tspan><tspan dy="-6.4" font-size="23.0">&#160;≥&#160;0.</tspan></text><text x="18.0" y="641.8" font-size="14.0" text-anchor="start" fill="#222"><tspan font-size="14.0">∂</tspan><tspan font-style="italic" font-size="14.0">L</tspan></text><path d="M18.0 645.7H36.0" stroke="#222" stroke-width="1"/><text x="18.0" y="657.5" font-size="14.0" text-anchor="start" fill="#222"><tspan font-size="14.0">∂</tspan><tspan font-style="italic" font-size="14.0">x</tspan></text><text x="37.0" y="651.0" font-size="14.0" text-anchor="start" fill="#222" textLength="124.0" lengthAdjust="spacingAndGlyphs"><tspan font-size="14.0">=</tspan><tspan font-style="italic" font-size="14.0">aye</tspan><tspan font-style="italic" dy="-5.3" font-size="8.7">axy</tspan><tspan dy="5.3" font-size="14.0">&#160;+&#160;</tspan><tspan font-style="italic" font-size="14.0">λ</tspan><tspan font-size="14.0">(3</tspan><tspan font-style="italic" font-size="14.0">x</tspan><tspan dy="-5.3" font-size="8.7">2</tspan><tspan dy="5.3" font-size="14.0">&#160;+1)&#160;=&#160;0,</tspan></text><rect x="11.0" y="634.0" width="3.0" height="7.0" fill="none" stroke="#333" stroke-width="1.0"/><rect x="11.0" y="649.0" width="3.0" height="7.0" fill="none" stroke="#333" stroke-width="1.0"/><rect x="11.0" y="658.0" width="3.0" height="6.0" fill="none" stroke="#333" stroke-width="1.0"/><rect x="11.0" y="667.0" width="3.0" height="6.0" fill="none" stroke="#333" stroke-width="1.0"/><text x="18.0" y="678.0" font-size="14.0" text-anchor="start" fill="#222"><tspan font-size="14.0">∂</tspan><tspan font-style="italic" font-size="14.0">L</tspan></text><path d="M177.5 630.0Q174.6 631.5 174.6 637.0V674.0" fill="none" stroke="#222" stroke-width="1"/><text x="191.0" y="648.4" font-size="16.0" text-anchor="start" fill="#222" textLength="115.0" lengthAdjust="spacingAndGlyphs"><tspan font-style="italic" font-size="16.0">a</tspan><tspan dy="4.5" font-size="9.9">11</tspan><tspan font-style="italic" dy="-4.5" font-size="16.0">x</tspan><tspan dy="4.5" font-size="9.9">1</tspan><tspan dy="-4.5" font-size="16.0">&#160;+&#160;</tspan><tspan font-style="italic" font-size="16.0">a</tspan><tspan dy="4.5" font-size="9.9">12</tspan><tspan font-style="italic" dy="-4.5" font-size="16.0">x</tspan><tspan dy="4.5" font-size="9.9">2</tspan><tspan dy="-4.5" font-size="16.0">&#160;≤&#160;</tspan><tspan font-style="italic" font-size="16.0">b</tspan><tspan dy="4.5" font-size="9.9">1</tspan><tspan dy="-4.5" font-size="16.0">,</tspan></text><text x="191.0" y="670.7" font-size="16.0" text-anchor="start" fill="#222" textLength="115.0" lengthAdjust="spacingAndGlyphs"><tspan font-style="italic" font-size="16.0">a</tspan><tspan dy="4.5" font-size="9.9">21</tspan><tspan font-style="italic" dy="-4.5" font-size="16.0">x</tspan><tspan dy="4.5" font-size="9.9">1</tspan><tspan dy="-4.5" font-size="16.0">&#160;+&#160;</tspan><tspan font-style="italic" font-size="16.0">a</tspan><tspan dy="4.5" font-size="9.9">22</tspan><tspan font-style="italic" dy="-4.5" font-size="16.0">x</tspan><tspan dy="4.5" font-size="9.9">2</tspan><tspan dy="-4.5" font-size="16.0">&#160;≤&#160;</tspan><tspan font-style="italic" font-size="16.0">b</tspan><tspan dy="4.5" font-size="9.9">2</tspan><tspan dy="-4.5" font-size="16.0">,</tspan></text></svg>
<div class="a" style="left:323px;top:0;width:17px;height:674px;background:#f0f0f0"></div>
<div class="a" style="left:325px;top:17px;width:13px;height:426px;background:#c1c1c1"></div>
<svg class="a" style="left:326px;top:6px" width="9" height="5" viewBox="0 0 9 5"><path d="M0 5L4.5 0 9 5z" fill="#a3a3a3"/></svg>
<svg class="a" style="left:326px;top:661px" width="9" height="5" viewBox="0 0 9 5"><path d="M0 0L4.5 5 9 0z" fill="#606060"/></svg>
</div>
<svg class="a" style="left:1253px;top:86px" width="17" height="17" viewBox="0 0 17 17"><path d="M1 1l15 15M16 1L1 16" stroke="#fff" stroke-width="2.4"/></svg>

<div id="task" class="a"></div>
<div class="a" style="left:30px;top:625px;width:30px;height:30px;border-radius:50%;background:#fff"></div>
<svg class="a" style="left:39px;top:633px" width="12" height="15" viewBox="0 0 12 15"><path d="M4 3.5L1 8l3 4.5L6 8z" fill="#f06aa0"/><path d="M5.5 1L3 5l3.5 5.5L8 7z" fill="#2a5aa8"/><path d="M8 4.5L5.5 9l3 5L11 9z" fill="#3ac0c8"/></svg>
<div class="a" style="left:70px;top:632px;height:18px;line-height:18px;font-size:13px;white-space:nowrap;color:#fff"><b>Инвестиции с доходностью 12,5% в год</b> <span style="color:#9a9a9a">Доходные апартаменты VALO, м. «Бухарестская…</span></div>
<div class="a" style="left:650px;top:633.4px;height:14px;line-height:13px;font-size:11px;white-space:nowrap;color:#a8aaaa;border-bottom:1px dotted #999">Юр.информация</div>
<div class="a" style="left:747px;top:629px;width:84px;height:23px;border-radius:3px;background:#ffdb4d;color:#222;font-size:14px;line-height:23px;text-align:center">Перейти</div>
<svg class="a" style="left:844px;top:635px" width="9" height="11" viewBox="0 0 9 11"><path d="M2.5 10.5V1h2.8c1.8 0 2.9 1 2.9 2.5S7.1 6 5.3 6H1M1 8h4.5" fill="none" stroke="#bbb" stroke-width="1.1"/></svg>
<svg class="a" style="left:867px;top:635px" width="11" height="11" viewBox="0 0 11 11"><path d="M1 1l9 9M10 1l-9 9" stroke="#ddd" stroke-width="1.4"/></svg>
<svg class="a" style="left:10px;top:670px" width="76" height="80" viewBox="0 0 76 80"><rect width="76" height="80" fill="#fff"/><defs><linearGradient id="t1g" x1="0" y1="0" x2="0" y2="1"><stop offset="0" stop-color="#0f3a78"/><stop offset=".5" stop-color="#1c4f98"/><stop offset=".8" stop-color="#143f7c"/><stop offset="1" stop-color="#082040"/></linearGradient></defs><rect width="76" height="80" fill="url(#t1g)"/><text x="0.0" y="8.0" font-size="4.5" fill="#dfe6f0" font-weight="normal" font-family="Liberation Sans" textLength="76.0" lengthAdjust="spacingAndGlyphs">выразить область значение программи</text><text x="0.0" y="13.0" font-size="4.5" fill="#dfe6f0" font-weight="normal" font-family="Liberation Sans" textLength="70.0" lengthAdjust="spacingAndGlyphs">функции через значение выразить </text><text x="0.0" y="18.0" font-size="4.5" fill="#dfe6f0" font-weight="normal" font-family="Liberation Sans" textLength="30.0" lengthAdjust="spacingAndGlyphs">выразить решен</text><path d="M32 15V29" stroke="#c0cce0" stroke-width=".6"/><text x="34.0" y="19.0" font-size="4.5" fill="#c0cce0" font-weight="normal" font-family="Liberation Sans" textLength="22.0" lengthAdjust="spacingAndGlyphs">через функ</text><text x="34.0" y="25.0" font-size="4.5" fill="#c0cce0" font-weight="normal" font-family="Liberation Sans" textLength="22.0" lengthAdjust="spacingAndGlyphs">программир</text><text x="0.0" y="36.0" font-size="4.5" fill="#dfe6f0" font-weight="normal" font-family="Liberation Sans" textLength="46.0" lengthAdjust="spacingAndGlyphs">значение область урав</text><text x="0.0" y="41.4" font-size="4.5" fill="#dfe6f0" font-weight="normal" font-family="Liberation Sans" textLength="76.0" lengthAdjust="spacingAndGlyphs">область область линейного решений п</text><text x="0.0" y="46.8" font-size="4.5" fill="#dfe6f0" font-weight="normal" font-family="Liberation Sans" textLength="76.0" lengthAdjust="spacingAndGlyphs">решений функции задачи решение зада</text><text x="0.0" y="52.2" font-size="4.5" fill="#dfe6f0" font-weight="normal" font-family="Liberation Sans" textLength="76.0" lengthAdjust="spacingAndGlyphs">интерпретация допустимых допустимых</text><text x="0.0" y="57.6" font-size="4.5" fill="#dfe6f0" font-weight="normal" font-family="Liberation Sans" textLength="18.0" lengthAdjust="spacingAndGlyphs">свободны</text></svg>
<svg class="a" style="left:96px;top:670px" width="80" height="80" viewBox="0 0 80 80"><rect width="80" height="80" fill="#fff"/><rect width="80" height="34" fill="#e2f0da"/><rect width="80" height="2" fill="#5b9bd5"/><rect y="33.5" width="80" height="1.2" fill="#5b9bd5"/><rect y="34.7" width="80" height="39.3" fill="#d9dbe8"/><rect y="74" width="80" height="6" fill="#5b9bd5"/><path d="M24 3.5V17" stroke="#666" stroke-width=".6"/><text x="26.0" y="7.0" font-size="4.3" fill="#555" font-weight="normal" font-family="Liberation Sans" textLength="26.0" lengthAdjust="spacingAndGlyphs">программиров</text><text x="26.0" y="11.3" font-size="4.3" fill="#555" font-weight="normal" font-family="Liberation Sans" textLength="26.0" lengthAdjust="spacingAndGlyphs">допустимых з</text><text x="26.0" y="15.6" font-size="4.3" fill="#555" font-weight="normal" font-family="Liberation Sans" textLength="26.0" lengthAdjust="spacingAndGlyphs">цели свободн</text><text x="20.0" y="21.0" font-size="4.3" fill="#555" font-weight="normal" font-family="Liberation Sans" textLength="34.0" lengthAdjust="spacingAndGlyphs">решений программ</text><text x="0.0" y="25.5" font-size="4.3" fill="#555" font-weight="normal" font-family="Liberation Sans" textLength="72.0" lengthAdjust="spacingAndGlyphs">геометрическая область интерпретаци</text><text x="0.0" y="30.0" font-size="4.3" fill="#555" font-weight="normal" font-family="Liberation Sans" textLength="66.0" lengthAdjust="spacingAndGlyphs">базисные решение базисные как ре</text><text x="0.0" y="42.0" font-size="4.3" fill="#444" font-weight="normal" font-family="Liberation Sans" textLength="80.0" lengthAdjust="spacingAndGlyphs">программирования свободные цели выразит</text><text x="0.0" y="46.8" font-size="4.3" fill="#444" font-weight="normal" font-family="Liberation Sans" textLength="80.0" lengthAdjust="spacingAndGlyphs">линейного допустимых как как выразить н</text><text x="0.0" y="51.5" font-size="4.3" fill="#444" font-weight="normal" font-family="Liberation Sans" textLength="74.0" lengthAdjust="spacingAndGlyphs">найти через выразить линейного интер</text><text x="0.0" y="56.1" font-size="4.3" fill="#444" font-weight="normal" font-family="Liberation Sans" textLength="40.0" lengthAdjust="spacingAndGlyphs">решений задачи допу</text><text x="28.0" y="61.0" font-size="4.3" fill="#444" font-weight="normal" font-family="Liberation Sans" textLength="18.0" lengthAdjust="spacingAndGlyphs">решений </text><text x="28.0" y="65.3" font-size="4.3" fill="#444" font-weight="normal" font-family="Liberation Sans" textLength="22.0" lengthAdjust="spacingAndGlyphs">допустимых</text><text x="28.0" y="69.6" font-size="4.3" fill="#444" font-weight="normal" font-family="Liberation Sans" textLength="16.0" lengthAdjust="spacingAndGlyphs">задачи </text></svg>
<svg class="a" style="left:186px;top:670px" width="80" height="80" viewBox="0 0 80 80"><rect width="80" height="80" fill="#fff"/><text x="18.0" y="8.0" font-size="5.0" fill="#7a3a3a" font-weight="normal" font-family="Liberation Sans" textLength="46.0" lengthAdjust="spacingAndGlyphs">геометрическая функ</text><text x="18.0" y="14.0" font-size="5.0" fill="#7a3a3a" font-weight="normal" font-family="Liberation Sans" textLength="52.0" lengthAdjust="spacingAndGlyphs">допустимых линейного </text><text x="2.0" y="19.0" font-size="3.6" fill="#555" font-weight="normal" font-family="Liberation Sans" textLength="48.0" lengthAdjust="spacingAndGlyphs">значение линейного базисные </text><text x="2.0" y="23.0" font-size="3.6" fill="#555" font-weight="normal" font-family="Liberation Sans" textLength="30.0" lengthAdjust="spacingAndGlyphs">через выразить че</text><text x="2.0" y="27.0" font-size="3.6" fill="#555" font-weight="normal" font-family="Liberation Sans" textLength="50.0" lengthAdjust="spacingAndGlyphs">программирования интерпретаци</text><text x="2.0" y="31.0" font-size="3.6" fill="#555" font-weight="normal" font-family="Liberation Sans" textLength="12.0" lengthAdjust="spacingAndGlyphs">базисны</text><text x="2.0" y="35.0" font-size="3.6" fill="#555" font-weight="normal" font-family="Liberation Sans" textLength="6.0" lengthAdjust="spacingAndGlyphs">как</text><text x="22.0" y="35.0" font-size="3.6" fill="#555" font-weight="normal" font-family="Liberation Sans" textLength="6.0" lengthAdjust="spacingAndGlyphs">най</text><text x="62.0" y="31.0" font-size="3.6" fill="#555" font-weight="normal" font-family="Liberation Sans" textLength="18.0" lengthAdjust="spacingAndGlyphs">функции ка</text><path d="M24 36V68H58" fill="none" stroke="#777" stroke-width=".8"/><path d="M24 45L55 66H24z" fill="#d4d4d4" stroke="#555" stroke-width=".8"/><path d="M20 42L62 74" stroke="#666" stroke-width=".7"/><text x="22.0" y="72.0" font-size="3.5" fill="#777" font-weight="normal" font-family="Liberation Sans" textLength="40.0" lengthAdjust="spacingAndGlyphs">уравнений выразить уравн</text><path d="M24 40V66" stroke="#999" stroke-width=".5" stroke-dasharray="1 1"/></svg>
<svg class="a" style="left:276px;top:670px" width="80" height="80" viewBox="0 0 80 80"><rect width="80" height="80" fill="#fff"/><text x="0.0" y="6.5" font-size="5.6" fill="#2020c0" font-weight="bold" font-family="Liberation Sans" textLength="80.0" lengthAdjust="spacingAndGlyphs">цели системы линейного как обл</text><text x="0.0" y="13.0" font-size="5.6" fill="#2020c0" font-weight="bold" font-family="Liberation Sans" textLength="80.0" lengthAdjust="spacingAndGlyphs">системы интерпретация цели зад</text><path d="M12 22V68H70" fill="none" stroke="#444" stroke-width=".8"/><path d="M16 24L60 78" stroke="#555" stroke-width=".7"/><path d="M20 30L48 80" stroke="#555" stroke-width=".7"/><path d="M26 24L40 80" stroke="#555" stroke-width=".7"/><path d="M36 24L18 80" stroke="#555" stroke-width=".7"/><path d="M44 26L24 78" stroke="#555" stroke-width=".7"/><path d="M8 52L65 32" stroke="#555" stroke-width=".7"/><path d="M6 64L70 42" stroke="#555" stroke-width=".7"/><path d="M22 38L64 48" stroke="#555" stroke-width=".7"/><path d="M14 34L60 68" stroke="#555" stroke-width=".7"/><text x="50.0" y="34.0" font-size="3.6" fill="#333" font-weight="normal" font-family="Liberation Sans" textLength="12.0" lengthAdjust="spacingAndGlyphs">линейно</text><text x="62.0" y="44.0" font-size="3.6" fill="#333" font-weight="normal" font-family="Liberation Sans" textLength="10.0" lengthAdjust="spacingAndGlyphs">значе</text><text x="68.0" y="56.0" font-size="3.6" fill="#333" font-weight="normal" font-family="Liberation Sans" textLength="10.0" lengthAdjust="spacingAndGlyphs">выраз</text><text x="68.0" y="72.0" font-size="3.6" fill="#333" font-weight="normal" font-family="Liberation Sans" textLength="10.0" lengthAdjust="spacingAndGlyphs">систе</text><text x="30.0" y="50.0" font-size="3.6" fill="#333" font-weight="normal" font-family="Liberation Sans" textLength="8.0" lengthAdjust="spacingAndGlyphs">сист</text></svg>
<svg class="a" style="left:366px;top:670px" width="80" height="80" viewBox="0 0 80 80"><rect width="80" height="80" fill="#fff"/><text x="14.0" y="8.0" font-size="4.2" fill="#2a8080" font-weight="bold" font-family="Liberation Sans" textLength="52.0" lengthAdjust="spacingAndGlyphs">переменные программировани</text><text x="0.0" y="14.0" font-size="3.3" fill="#555" font-weight="normal" font-family="Liberation Sans" textLength="60.0" lengthAdjust="spacingAndGlyphs">через переменные свободные геометричес</text><text x="0.0" y="17.9" font-size="3.3" fill="#555" font-weight="normal" font-family="Liberation Sans" textLength="45.0" lengthAdjust="spacingAndGlyphs">как функции программирования</text><text x="0.0" y="21.8" font-size="3.3" fill="#555" font-weight="normal" font-family="Liberation Sans" textLength="52.0" lengthAdjust="spacingAndGlyphs">функции задачи системы интерпрета</text><text x="0.0" y="25.7" font-size="3.3" fill="#555" font-weight="normal" font-family="Liberation Sans" textLength="80.0" lengthAdjust="spacingAndGlyphs">переменные через программирования базисные допусти</text><text x="0.0" y="29.6" font-size="3.3" fill="#555" font-weight="normal" font-family="Liberation Sans" textLength="80.0" lengthAdjust="spacingAndGlyphs">задачи задачи линейного задачи через свободные инт</text><text x="0.0" y="33.5" font-size="3.3" fill="#555" font-weight="normal" font-family="Liberation Sans" textLength="64.0" lengthAdjust="spacingAndGlyphs">геометрическая как как уравнений системы</text><text x="0.0" y="37.4" font-size="3.3" fill="#555" font-weight="normal" font-family="Liberation Sans" textLength="80.0" lengthAdjust="spacingAndGlyphs">программирования значение как линейного через зада</text><text x="0.0" y="41.3" font-size="3.3" fill="#555" font-weight="normal" font-family="Liberation Sans" textLength="80.0" lengthAdjust="spacingAndGlyphs">цели решение решение найти свободные решений через</text><text x="0.0" y="45.2" font-size="3.3" fill="#555" font-weight="normal" font-family="Liberation Sans" textLength="70.0" lengthAdjust="spacingAndGlyphs">линейного функции цели решение интерпретация</text><text x="0.0" y="49.1" font-size="3.3" fill="#555" font-weight="normal" font-family="Liberation Sans" textLength="80.0" lengthAdjust="spacingAndGlyphs">базисные решение решений найти линейного линейного</text><text x="0.0" y="55.0" font-size="3.3" fill="#555" font-weight="normal" font-family="Liberation Sans" textLength="80.0" lengthAdjust="spacingAndGlyphs">уравнений значение свободные решений базисные найт</text><text x="0.0" y="58.8" font-size="3.3" fill="#555" font-weight="normal" font-family="Liberation Sans" textLength="80.0" lengthAdjust="spacingAndGlyphs">значение значение область системы решение линейног</text><text x="0.0" y="62.6" font-size="3.3" fill="#555" font-weight="normal" font-family="Liberation Sans" textLength="80.0" lengthAdjust="spacingAndGlyphs">функции цели через выразить цели решение как систе</text><text x="0.0" y="66.4" font-size="3.3" fill="#555" font-weight="normal" font-family="Liberation Sans" textLength="80.0" lengthAdjust="spacingAndGlyphs">функции линейного программирования через область л</text><text x="0.0" y="70.2" font-size="3.3" fill="#555" font-weight="normal" font-family="Liberation Sans" textLength="70.0" lengthAdjust="spacingAndGlyphs">уравнений системы программирования область д</text><path d="M2 60L20 74M6 58L26 72M0 64L14 74" stroke="#9ac" stroke-width=".8"/><path d="M0 73H18L24 76" stroke="#4a8ab0" stroke-width=".8" fill="none"/></svg>
<svg class="a" style="left:455px;top:669px" width="82" height="82" viewBox="0 0 82 82"><rect width="82" height="82" fill="#a4a4a4"/><g transform="translate(-15.2,0.5) scale(0.1606)" fill="#1e1e1e"><use href="#mathg"/></g><rect x="0.8" y="0.8" width="80.4" height="80.4" fill="none" stroke="#f6d040" stroke-width="1.6"/></svg>
<svg class="a" style="left:546px;top:670px" width="80" height="80" viewBox="0 0 80 80"><rect width="80" height="80" fill="#fff"/><text x="3" y="9.5" font-size="6.5" font-weight="bold" font-family="Liberation Serif" fill="#222" textLength="74" lengthAdjust="spacingAndGlyphs">4. Табличный симплексный метод</text><text x="0.0" y="17.0" font-size="4.4" fill="#222" font-weight="bold" font-family="Liberation Serif" textLength="68.0" lengthAdjust="spacingAndGlyphs">базисные переменные через решени</text><text x="0.0" y="21.7" font-size="4.4" fill="#222" font-weight="bold" font-family="Liberation Serif" textLength="80.0" lengthAdjust="spacingAndGlyphs">свободные решений функции цели свободн</text><text x="0.0" y="26.4" font-size="4.4" fill="#222" font-weight="bold" font-family="Liberation Serif" textLength="72.0" lengthAdjust="spacingAndGlyphs">выразить функции базисные цели реш</text><text x="0.0" y="31.1" font-size="4.4" fill="#222" font-weight="bold" font-family="Liberation Serif" textLength="60.0" lengthAdjust="spacingAndGlyphs">решений найти линейного обла</text><rect y="36" width="80" height="9" fill="#d8c888"/><rect y="45" width="80" height="8" fill="#f0ead8"/><rect y="53" width="80" height="8" fill="#faf6ec"/><rect y="61" width="80" height="8" fill="#ece4cc"/><rect y="69" width="80" height="5" fill="#faf6ec"/><text x="8.0" y="42.0" font-size="4.0" fill="#5a4a20" font-weight="normal" font-family="Liberation Serif" textLength="70.0" lengthAdjust="spacingAndGlyphs">решение допустимых выразить цели зад</text><text x="10.0" y="50.5" font-size="4.2" fill="#444" font-weight="normal" font-family="Liberation Serif" textLength="68.0" lengthAdjust="spacingAndGlyphs">программирования задачи допустимых</text><text x="10.0" y="58.0" font-size="4.2" fill="#444" font-weight="normal" font-family="Liberation Serif" textLength="68.0" lengthAdjust="spacingAndGlyphs">как линейного интерпретация уравне</text><text x="10.0" y="65.5" font-size="4.2" fill="#444" font-weight="normal" font-family="Liberation Serif" textLength="68.0" lengthAdjust="spacingAndGlyphs">уравнений переменные решений функц</text><text x="10.0" y="73.0" font-size="4.2" fill="#444" font-weight="normal" font-family="Liberation Serif" textLength="68.0" lengthAdjust="spacingAndGlyphs">интерпретация через решение решени</text></svg>
<svg class="a" style="left:636px;top:670px" width="80" height="80" viewBox="0 0 80 80"><rect width="80" height="80" fill="#fff"/><text x="0.0" y="3.5" font-size="3.3" fill="#333" font-weight="normal" font-family="Liberation Sans" textLength="80.0" lengthAdjust="spacingAndGlyphs">через решение программирования найти значение пере</text><text x="0.0" y="7.1" font-size="3.3" fill="#333" font-weight="normal" font-family="Liberation Sans" textLength="10.0" lengthAdjust="spacingAndGlyphs">цели б</text><text x="0.0" y="14.0" font-size="3.6" fill="#444" font-weight="normal" font-family="Liberation Sans" textLength="14.0" lengthAdjust="spacingAndGlyphs">геометри</text><text x="0.0" y="19.0" font-size="3.6" fill="#444" font-weight="normal" font-family="Liberation Sans" textLength="14.0" lengthAdjust="spacingAndGlyphs">геометри</text><text x="0.0" y="24.0" font-size="3.6" fill="#444" font-weight="normal" font-family="Liberation Sans" textLength="14.0" lengthAdjust="spacingAndGlyphs">линейног</text><text x="0.0" y="29.0" font-size="3.6" fill="#444" font-weight="normal" font-family="Liberation Sans" textLength="14.0" lengthAdjust="spacingAndGlyphs">как реше</text><path d="M18 11V38M60 11V38" stroke="#555" stroke-width=".6"/><text x="20.0" y="14.0" font-size="3.6" fill="#444" font-weight="normal" font-family="Liberation Sans" textLength="34.0" lengthAdjust="spacingAndGlyphs">геометрическая зада</text><text x="20.0" y="19.0" font-size="3.6" fill="#444" font-weight="normal" font-family="Liberation Sans" textLength="34.0" lengthAdjust="spacingAndGlyphs">переменные функции </text><text x="20.0" y="24.0" font-size="3.6" fill="#444" font-weight="normal" font-family="Liberation Sans" textLength="34.0" lengthAdjust="spacingAndGlyphs">свободные базисные </text><text x="20.0" y="29.0" font-size="3.6" fill="#444" font-weight="normal" font-family="Liberation Sans" textLength="34.0" lengthAdjust="spacingAndGlyphs">значение решение ба</text><text x="62.0" y="14.0" font-size="3.6" fill="#444" font-weight="normal" font-family="Liberation Sans" textLength="18.0" lengthAdjust="spacingAndGlyphs">цели допус</text><text x="62.0" y="19.0" font-size="3.6" fill="#444" font-weight="normal" font-family="Liberation Sans" textLength="18.0" lengthAdjust="spacingAndGlyphs">выразить д</text><text x="62.0" y="24.0" font-size="3.6" fill="#444" font-weight="normal" font-family="Liberation Sans" textLength="18.0" lengthAdjust="spacingAndGlyphs">задачи пер</text><text x="62.0" y="29.0" font-size="3.6" fill="#444" font-weight="normal" font-family="Liberation Sans" textLength="18.0" lengthAdjust="spacingAndGlyphs">выразить и</text><text x="0.0" y="45.0" font-size="4.0" fill="#222" font-weight="normal" font-family="Liberation Sans" textLength="30.0" lengthAdjust="spacingAndGlyphs">значение цели у</text><text x="40.0" y="45.0" font-size="3.6" fill="#222" font-weight="bold" font-family="Liberation Sans" textLength="34.0" lengthAdjust="spacingAndGlyphs">интерпретация линей</text><text x="0.0" y="56.0" font-size="3.6" fill="#222" font-weight="bold" font-family="Liberation Sans" textLength="80.0" lengthAdjust="spacingAndGlyphs">допустимых линейного решений функции решение с</text><text x="2.0" y="62.0" font-size="3.6" fill="#444" font-weight="normal" font-family="Liberation Sans" textLength="70.0" lengthAdjust="spacingAndGlyphs">системы переменные линейного значение ге</text><path d="M45 63.5H76" stroke="#d04080" stroke-width=".5"/><text x="0.0" y="69.0" font-size="4.0" fill="#333" font-weight="normal" font-family="Liberation Sans" textLength="24.0" lengthAdjust="spacingAndGlyphs">функции зада</text><text x="0.0" y="76.0" font-size="3.3" fill="#333" font-weight="normal" font-family="Liberation Sans" textLength="80.0" lengthAdjust="spacingAndGlyphs">интерпретация как выразить уравнений найти задачи </text><text x="0.0" y="79.6" font-size="3.3" fill="#333" font-weight="normal" font-family="Liberation Sans" textLength="80.0" lengthAdjust="spacingAndGlyphs">допустимых найти значение уравнений решение переме</text></svg>
<svg class="a" style="left:726px;top:670px" width="80" height="80" viewBox="0 0 80 80"><rect width="80" height="80" fill="#fff"/><rect x="0" y="1" width="80" height="4.5" fill="#6a9a80"/><text x="0.0" y="4.5" font-size="3.8" fill="#222" font-weight="bold" font-family="Liberation Sans" textLength="80.0" lengthAdjust="spacingAndGlyphs">интерпретация свободные геометрическая базис</text><text x="16.0" y="9.5" font-size="3.8" fill="#222" font-weight="bold" font-family="Liberation Sans" textLength="48.0" lengthAdjust="spacingAndGlyphs">функции интерпретация пере</text><g font-family="Liberation Serif" fill="#444"><text x="2" y="22" font-size="8.5" textLength="58" lengthAdjust="spacingAndGlyphs">x₁+c₂x₂ → min(max)</text><text x="2" y="32" font-size="8.5">Vz = (c₁,c₂)</text><text x="2" y="42" font-size="8.5" textLength="38" lengthAdjust="spacingAndGlyphs">a₁₁x₁+a₁₂x₂ ≤ b₁</text><text x="2" y="52" font-size="8.5" textLength="38" lengthAdjust="spacingAndGlyphs">a₂₁x₁+a₂₂x₂ ≤ b₂</text><text x="2" y="67" font-size="8.5" textLength="40" lengthAdjust="spacingAndGlyphs">a₁x₁+a₂x₂ ≤ b₁</text><text x="8" y="76" font-size="8.5">x₁,x₂ ≥ 0</text></g><path d="M0 58H48" stroke="#777" stroke-width=".7" stroke-dasharray="1 1"/></svg>
<svg class="a" style="left:816px;top:670px" width="80" height="80" viewBox="0 0 80 80"><rect width="80" height="80" fill="#fff"/><defs><linearGradient id="t10g" x1="0" y1="0" x2="1" y2="1"><stop offset="0" stop-color="#ffffff"/><stop offset=".6" stop-color="#f4f4f4"/><stop offset="1" stop-color="#d8d8d8"/></linearGradient></defs><rect width="80" height="80" fill="url(#t10g)"/><text x="0.0" y="10.0" font-size="6.0" fill="#8a9070" font-weight="normal" font-family="Liberation Serif" textLength="64.0" lengthAdjust="spacingAndGlyphs">программирования линей</text><text x="0.0" y="16.5" font-size="6.0" fill="#8a9070" font-weight="normal" font-family="Liberation Serif" textLength="50.0" lengthAdjust="spacingAndGlyphs">решений решение б</text><text x="0.0" y="24.0" font-size="3.2" fill="#555" font-weight="normal" font-family="Liberation Sans" textLength="80.0" lengthAdjust="spacingAndGlyphs">свободные геометрическая найти решение решение свобо</text><text x="0.0" y="27.6" font-size="3.2" fill="#555" font-weight="normal" font-family="Liberation Sans" textLength="76.0" lengthAdjust="spacingAndGlyphs">цели программирования значение геометрическая баз</text><text x="0.0" y="31.2" font-size="3.2" fill="#555" font-weight="normal" font-family="Liberation Sans" textLength="80.0" lengthAdjust="spacingAndGlyphs">интерпретация функции базисные выразить геометрическ</text><text x="0.0" y="34.8" font-size="3.2" fill="#555" font-weight="normal" font-family="Liberation Sans" textLength="80.0" lengthAdjust="spacingAndGlyphs">найти свободные через выразить функции уравнений чер</text><text x="0.0" y="38.4" font-size="3.2" fill="#555" font-weight="normal" font-family="Liberation Sans" textLength="70.0" lengthAdjust="spacingAndGlyphs">решений базисные область выразить программиро</text><text x="0.0" y="42.0" font-size="3.2" fill="#555" font-weight="normal" font-family="Liberation Sans" textLength="80.0" lengthAdjust="spacingAndGlyphs">базисные интерпретация геометрическая функции решени</text><text x="0.0" y="45.6" font-size="3.2" fill="#555" font-weight="normal" font-family="Liberation Sans" textLength="60.0" lengthAdjust="spacingAndGlyphs">решение цели решений базисные свободные</text><text x="0.0" y="49.2" font-size="3.2" fill="#555" font-weight="normal" font-family="Liberation Sans" textLength="36.0" lengthAdjust="spacingAndGlyphs">найти найти через через</text><text x="0.0" y="52.8" font-size="3.2" fill="#555" font-weight="normal" font-family="Liberation Sans" textLength="30.0" lengthAdjust="spacingAndGlyphs">интерпретация уравн</text><text x="0.0" y="56.4" font-size="3.2" fill="#555" font-weight="normal" font-family="Liberation Sans" textLength="20.0" lengthAdjust="spacingAndGlyphs">значение лине</text><text x="18.0" y="58.0" font-size="3.2" fill="#555" font-weight="normal" font-family="Liberation Sans" textLength="30.0" lengthAdjust="spacingAndGlyphs">функции решений най</text><text x="18.0" y="61.5" font-size="3.2" fill="#555" font-weight="normal" font-family="Liberation Sans" textLength="30.0" lengthAdjust="spacingAndGlyphs">через переменные ин</text><text x="0.0" y="65.0" font-size="3.2" fill="#555" font-weight="normal" font-family="Liberation Sans" textLength="70.0" lengthAdjust="spacingAndGlyphs">через уравнений задачи функции выразить перем</text><text x="0.0" y="68.5" font-size="3.2" fill="#555" font-weight="normal" font-family="Liberation Sans" textLength="60.0" lengthAdjust="spacingAndGlyphs">геометрическая свободные задачи уравнен</text><text x="0.0" y="72.0" font-size="3.2" fill="#555" font-weight="normal" font-family="Liberation Sans" textLength="40.0" lengthAdjust="spacingAndGlyphs">базисные выразить функции </text></svg>
<div class="a" style="left:244px;top:760px;width:48px;height:40px;background:#3a3338"></div>
<div class="a" style="left:244px;top:797px;width:48px;height:3px;background:#76b9ed"></div>
<div class="a" style="left:396px;top:797px;width:38px;height:3px;background:#76b9ed"></div>
<svg class="a" style="left:16px;top:772px" width="17" height="17" viewBox="0 0 17 17"><path d="M0 2.3L7 1.3V8H0zM8 1.1L17 0V8H8zM0 9h7v6.7L0 14.7zM8 9h9v8l-9-1.2z" fill="#fff"/></svg>
<svg class="a" style="left:63px;top:771px" width="18" height="18" viewBox="0 0 18 18"><circle cx="10.5" cy="7" r="5.6" fill="none" stroke="#fff" stroke-width="1.3"/><path d="M6.6 11L1 16.8" stroke="#fff" stroke-width="1.4"/></svg>
<svg class="a" style="left:109px;top:772px" width="22" height="16" viewBox="0 0 22 16"><rect x="5.5" y="0.7" width="11" height="14.6" fill="none" stroke="#fff" stroke-width="1.3"/><path d="M3 2.5H0.7v11H3M19 2.5h2.3v11H19" fill="none" stroke="#fff" stroke-width="1.2"/></svg>
<svg class="a" style="left:158px;top:767px" width="25" height="25" viewBox="0 0 25 25"><ellipse cx="8" cy="12.5" rx="6.5" ry="3.5" fill="#777" opacity=".75"/><ellipse cx="11" cy="8" rx="8.3" ry="6" transform="rotate(-18 11 8)" fill="#f2f2f2" stroke="#e02a2a" stroke-width="1.5"/><path d="M5.5 4.5l9 10M9 3.5l7 11" stroke="#666" stroke-width="1.3"/><ellipse cx="14.5" cy="19.5" rx="2" ry="3.3" transform="rotate(-25 14.5 19.5)" fill="none" stroke="#2a9ee0" stroke-width="1.5"/><ellipse cx="20.5" cy="15.5" rx="3.3" ry="2" transform="rotate(-25 20.5 15.5)" fill="none" stroke="#2a9ee0" stroke-width="1.5"/></svg>
<svg class="a" style="left:208px;top:769px" width="22" height="21" viewBox="0 0 22 21"><path fill-rule="evenodd" d="M21.5 12.5H8c.3 3 2.6 4.8 5.8 4.8 2.4 0 4.7-.8 7-2.2v4.2c-2.5 1.3-4.8 1.7-7.5 1.7C6.8 21 3 17 3 11.2 3 5.2 7 1 12.5 1 18 1 21.5 4.6 21.5 10.2zM16.6 9c-.2-2.5-1.8-4.1-4.3-4.1S8.4 6.5 8 9z" fill="#0a7ad8"/><path d="M0.8 11C1.3 5.5 5.8 1.2 11.5 1.2c2.5 0 4.5.7 6 2" fill="none" stroke="#0a7ad8" stroke-width="1.6"/></svg>
<svg class="a" style="left:256px;top:768px" width="26" height="25" viewBox="0 0 26 25"><circle cx="12" cy="13" r="11.2" fill="#f0f0f0"/><path d="M7.5 7.5l4.7 6.5v7M17 7.5l-4.8 6.5" fill="none" stroke="#e52a22" stroke-width="1.9"/><path d="M17.5 2l2.3 2.5 3-.5-1 2.8 2.2 2.4-3.2.3-1.3-2.6-2.6-.8z" fill="#2a8ee0"/></svg>
<svg class="a" style="left:306px;top:770px" width="22" height="19" viewBox="0 0 22 19"><path d="M0 0.5h7.5l1.5 2h13v16H0z" fill="#e8c050"/><rect x="0" y="3.5" width="22" height="15" fill="#fbe08a"/><path d="M6 11h10v3h-2.5v5h-5v-5H6z" fill="#2aa4e8"/></svg>
<svg class="a" style="left:354px;top:767px" width="23" height="26" viewBox="0 0 23 26"><path d="M6.5 6.5V4.5C6.5 2.3 8 1 10 1s3.5 1.3 3.5 3.5v2M9 6.5V4.5C9 2.5 10.5 1.3 12.5 1.3S16 2.5 16 4.5v2" fill="none" stroke="#fff" stroke-width="1.1"/><path d="M1 5.5L22 4.5V25L1 24z" fill="#fff"/><path d="M4.5 9.5l4.5-.6v4.6H4.5zM10.5 8.7l5-.7v5.5h-5zM4.5 14.5H9v4.4l-4.5-.5zM10.5 14.5h5v5.2l-5-.6z" fill="#111"/></svg>
<svg class="a" style="left:402px;top:769px" width="26" height="22" viewBox="0 0 26 22"><rect x="7" y="0" width="18" height="5.3" fill="#41a5ee"/><rect x="7" y="5.3" width="18" height="5.3" fill="#2b7cd3"/><rect x="7" y="10.6" width="18" height="5.3" fill="#185abd"/><rect x="7" y="15.9" width="18" height="5.3" fill="#103f91"/><rect x="1" y="5" width="12.5" height="12" fill="#185abd"/><path d="M2.8 7.5h1.6l1.1 5 1.3-5h1.4l1.3 5 1.1-5h1.6l-1.9 7.3H8.7L7.5 10l-1.2 4.8H4.7z" fill="#fff"/></svg>
<svg class="a" style="left:1070px;top:775px" width="13" height="9" viewBox="0 0 13 9"><path d="M0.8 8L6.5 1.8 12.2 8" fill="none" stroke="#fff" stroke-width="1.3"/></svg>
<svg class="a" style="left:1099px;top:771px" width="18" height="17" viewBox="0 0 18 17"><path d="M0.5 0.5h16v11h-6.5v3.5H0.5z" fill="#fff"/><path d="M3 3.5h10M3 6h10M3 8.5h7" stroke="#111" stroke-width="1"/><circle cx="13" cy="13" r="3.6" fill="#111" stroke="#fff" stroke-width="1.2"/><path d="M11 13h4" stroke="#fff" stroke-width="1.2"/></svg>
<svg class="a" style="left:1131px;top:772px" width="24" height="15" viewBox="0 0 24 15"><rect x="0.7" y="0.7" width="22.6" height="13.6" rx="1.5" fill="none" stroke="#fff" stroke-width="1.3"/><path d="M4 4h16M4 7h16M7 10.5h10" stroke="#fff" stroke-width="1" stroke-dasharray="1.2 0.9"/></svg>
<div class="a" style="left:1170px;top:772px;font-size:12px;line-height:14px;color:#fff;transform-origin:0 0;transform:scaleX(0.87)">ENG</div>
<div class="a" style="left:1197px;top:763px;width:80px;text-align:center;font-size:12px;line-height:16px;color:#fff;transform-origin:40px 0;transform:scaleX(0.89)">15:44<br>18.04.2020</div>
<div class="a" style="left:1275px;top:760px;width:1px;height:40px;background:#3a3036"></div>
</body></html>
